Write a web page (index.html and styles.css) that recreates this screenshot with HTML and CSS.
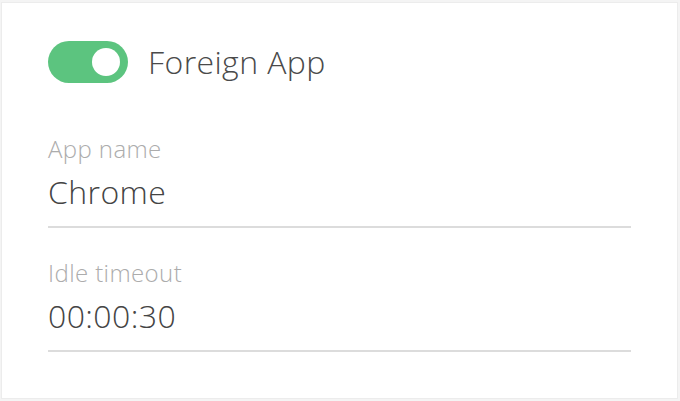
FILE: index.html
```html
<!DOCTYPE html>
<html lang="en">
<head>
    <meta charset="UTF-8">
    <title>Foreign App</title>
    <link rel="stylesheet" href="styles.css">
</head>
<body>
    <div class="card">
        <div class="switch-row">
            <span class="switch on"><span class="knob"></span></span>
            <span class="switch-label">Foreign App</span>
        </div>

        <div class="field first">
            <div class="field-label">App name</div>
            <div class="field-value">Chrome</div>
        </div>

        <div class="field">
            <div class="field-label">Idle timeout</div>
            <div class="field-value">00:00:30</div>
        </div>
    </div>
</body>
</html>
```

FILE: styles.css
```css
html, body {
    margin: 0;
    padding: 0;
    background: #f4f4f4;
}

body {
    font-family: "Open Sans", "Liberation Sans", sans-serif;
    font-weight: 300;
    letter-spacing: 0.4px;
    padding: 2px 2px 1px 1px;
}

.card {
    height: 397px;
    box-sizing: border-box;
    background: #fff;
    border: 1px solid #ececec;
    padding: 38px 46px 0 46px;
}

.switch-row {
    display: flex;
    align-items: center;
    gap: 20px;
}

.switch {
    width: 80px;
    height: 42px;
    border-radius: 21px;
    background: #5cc47f;
    display: flex;
    align-items: center;
    justify-content: flex-end;
    padding-right: 8px;
    box-sizing: border-box;
}

.knob {
    width: 28px;
    height: 28px;
    border-radius: 50%;
    background: #fff;
}

.switch-label {
    font-size: 32px;
    line-height: 42px;
    color: #4a4a4a;
}

.field {
    margin-top: 29px;
    border-bottom: 2px solid #dcdcdc;
    padding-bottom: 12px;
}

.field.first {
    margin-top: 50px;
}

.field-label {
    font-size: 24px;
    line-height: 32px;
    color: #acacac;
}

.field-value {
    margin-top: 5px;
    font-size: 32px;
    line-height: 44px;
    color: #444;
}
```
